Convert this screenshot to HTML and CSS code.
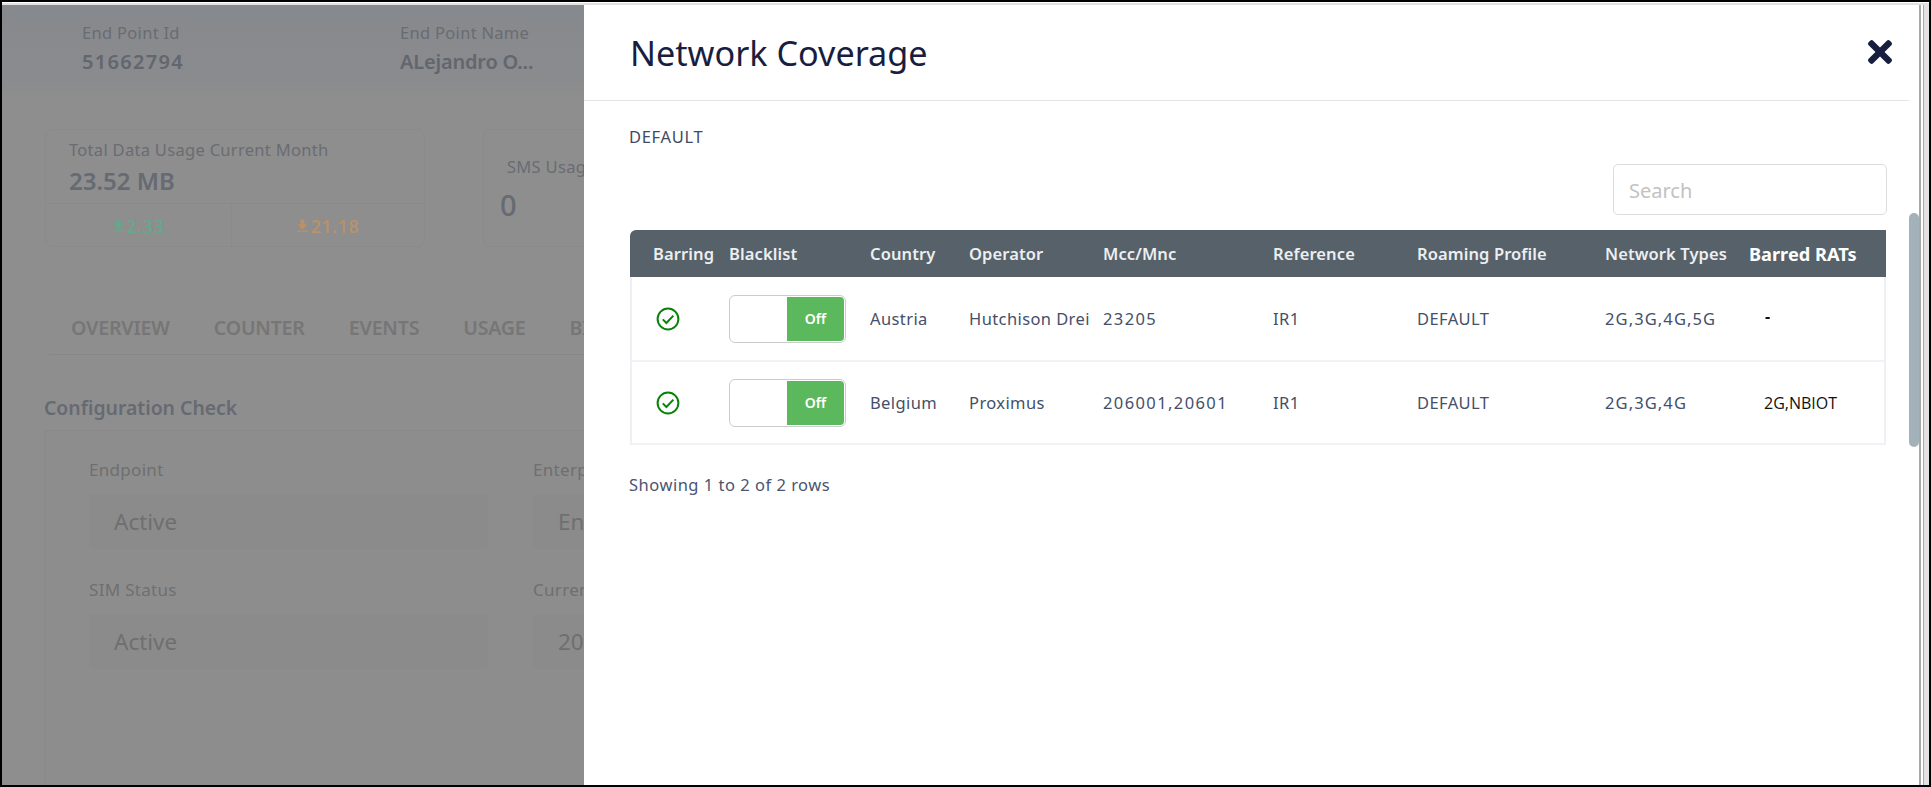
FILE: index.html
```html
<!DOCTYPE html>
<html lang="en">
<head>
<meta charset="utf-8">
<title>Network Coverage</title>
<link rel="stylesheet" href="styles.css">
</head>
<body>
<div class="frame">
  <div class="topline"></div>
  <div class="stage">
    <section class="back">
      <header class="ep-head">
        <div class="ep-id"><div class="ep-label">End Point Id</div><div class="ep-value ep-digits">51662794</div></div>
        <div class="ep-name"><div class="ep-label">End Point Name</div><div class="ep-value">ALejandro O...</div></div>
      </header>
      <div class="cards">
        <div class="card card-wide">
          <div class="card-top">
            <div class="card-label">Total Data Usage Current Month</div>
            <div class="card-value">23.52 MB</div>
          </div>
          <div class="card-split">
            <div class="split up"><svg class="arrow" viewBox="0 0 12 14"><path d="M6 0l5 6H8v4H4V6H1zM0 12h12v1.2H0z"/></svg>2.33</div>
            <div class="split down"><svg class="arrow" viewBox="0 0 12 14"><path d="M4 0h4v5h3l-5 6-5-6h3zM0 12h12v1.2H0z"/></svg>21.18</div>
          </div>
        </div>
        <div class="card card-sms">
          <div class="card-label">SMS Usage</div>
          <div class="sms-value">0</div>
        </div>
      </div>
      <nav class="tabs">
        <span class="tab">OVERVIEW</span><span class="tab">COUNTER</span><span class="tab">EVENTS</span><span class="tab">USAGE</span><span class="tab">BILLING</span>
      </nav>
      <h2 class="config-title">Configuration Check</h2>
      <div class="config">
        <div class="field"><div class="field-label">Endpoint</div><div class="field-box">Active</div></div>
        <div class="field"><div class="field-label">Enterprise</div><div class="field-box">Enabled</div></div>
        <div class="field"><div class="field-label">SIM Status</div><div class="field-box">Active</div></div>
        <div class="field"><div class="field-label">Current</div><div class="field-box">2023</div></div>
      </div>
    </section>
    <aside class="drawer">
      <div class="drawer-main">
        <header class="drawer-head">
          <h1 class="drawer-title">Network Coverage</h1>
          <svg class="close" viewBox="0 80 352 352"><path d="M242.72 256l100.07-100.07c12.28-12.28 12.28-32.19 0-44.48l-22.24-22.24c-12.28-12.28-32.19-12.28-44.48 0L176 189.28 75.93 89.21c-12.28-12.28-32.19-12.28-44.48 0L9.21 111.45c-12.28 12.28-12.28 32.19 0 44.48L109.28 256 9.21 356.07c-12.28 12.28-12.28 32.19 0 44.48l22.24 22.24c12.28 12.28 32.2 12.28 44.48 0L176 322.72l100.07 100.07c12.28 12.28 32.2 12.28 44.48 0l22.24-22.24c12.28-12.28 12.28-32.19 0-44.48L242.72 256z"/></svg>
        </header>
        <div class="drawer-body">
          <div class="profile">DEFAULT</div>
          <div class="toolbar"><input class="search" type="text" placeholder="Search"></div>
          <table class="grid">
            <colgroup>
              <col class="c1"><col class="c2"><col class="c3"><col class="c4"><col class="c5"><col class="c6"><col class="c7"><col class="c8"><col class="c9">
            </colgroup>
            <thead>
              <tr><th class="first">Barring</th><th>Blacklist</th><th>Country</th><th>Operator</th><th>Mcc/Mnc</th><th>Reference</th><th>Roaming Profile</th><th>Network Types</th><th class="rat-head">Barred RATs</th></tr>
            </thead>
            <tbody>
              <tr class="row-a">
                <td class="first"><svg class="ok" viewBox="0 0 24 24"><circle cx="12" cy="12" r="10.4"/><path d="M6.8 12.4l3.6 3.6 7-7.4"/></svg></td>
                <td><div class="toggle"><span class="toggle-off">Off</span></div></td>
                <td>Austria</td><td>Hutchison Drei</td><td class="num">23205</td><td>IR1</td><td>DEFAULT</td><td class="net">2G,3G,4G,5G</td><td class="rat dash">-</td>
              </tr>
              <tr class="row-b">
                <td class="first"><svg class="ok" viewBox="0 0 24 24"><circle cx="12" cy="12" r="10.4"/><path d="M6.8 12.4l3.6 3.6 7-7.4"/></svg></td>
                <td><div class="toggle"><span class="toggle-off">Off</span></div></td>
                <td>Belgium</td><td>Proximus</td><td class="num">206001,20601</td><td>IR1</td><td>DEFAULT</td><td class="net">2G,3G,4G</td><td class="rat">2G,NBIOT</td>
              </tr>
            </tbody>
          </table>
          <div class="rows-note">Showing 1 to 2 of 2 rows</div>
        </div>
      </div>
      <div class="track"><div class="thumb"></div></div>
    </aside>
    <div class="edge"></div>
  </div>
</div>
</body>
</html>
```

FILE: styles.css
```css
* { box-sizing: border-box; }
html, body { margin: 0; padding: 0; height: 100%; overflow: hidden; }
body { font-family: "Noto Sans", "Open Sans", sans-serif; background: #fff; color: #444f6a; }

.frame { height: 787px; border: 2px solid #000; display: flex; flex-direction: column; background: #fff; }
.topline { height: 2px; margin-top: 1px; background: #e2e2e2; flex: none; }
.stage { flex: 1; min-height: 0; display: flex; }

/* dimmed page behind the drawer */
.back { width: 582px; flex: none; overflow: hidden; background: #8e8e8e; color: #6b6e73; }
.ep-head { height: 93px; background: linear-gradient(#86898d, #8a8b8d 80%, #8e8e8e); padding: 17px 0 0 80px; display: flex; }
.ep-id { width: 318px; }
.ep-label { font-size: 16.5px; letter-spacing: .3px; line-height: 22px; color: #696c72; white-space: nowrap; }
.ep-value { margin-top: 4px; font-size: 20px; font-weight: 600; line-height: 28px; color: #62666e; white-space: nowrap; letter-spacing: -.2px; }
.ep-digits { letter-spacing: 1.3px; }

.cards { display: flex; gap: 58px; padding: 31px 0 0 43px; }
.card { height: 118px; border: 1px solid #8a8a8a; border-radius: 8px; flex: none; }
.card-wide { width: 380px; }
.card-sms { width: 200px; padding: 25px 0 0 23px; }
.card-top { height: 74px; padding: 6px 0 0 23px; border-bottom: 1px solid #8a8a8a; }
.card-label { font-size: 16.5px; letter-spacing: .3px; line-height: 28px; color: #696c72; white-space: nowrap; }
.card-sms .card-label { line-height: 24px; }
.card-value { margin-top: 1px; font-size: 24px; font-weight: 600; line-height: 32px; color: #666a72; }
.card-split { display: flex; height: 42px; padding-top: 1px; }
.split { flex: 1; font-size: 18px; letter-spacing: .5px; font-weight: 500; display: flex; align-items: center; justify-content: center; gap: 3px; }
.split:first-child { flex: none; width: 186px; border-right: 1px solid #8a8a8a; }
.up { color: #62aa8c; fill: #62aa8c; }
.down { color: #bd9168; fill: #bd9168; }
.arrow { width: 11px; height: 14px; }
.sms-value { font-size: 29px; font-weight: 500; margin: 8px 0 0 -7px; color: #666a72; line-height: 36px; }

.tabs { margin: 66px 0 0 47px; height: 42px; border-bottom: 1px solid #878787; display: flex; gap: 44px; padding: 0 0 0 22px; overflow: hidden; white-space: nowrap; }
.tab { font-size: 19.6px; font-weight: 600; line-height: 30px; color: #767676; letter-spacing: -.2px; }

.config-title { margin: 40px 0 0 42px; font-size: 19.4px; font-weight: 600; line-height: 26px; color: #666a72; white-space: nowrap; }
.config { margin: 9px 0 0 42px; padding: 28px 0 0 44px; height: 370px; width: 900px; background: #8d8d8d; border: 1px solid #898989; border-radius: 4px; display: grid; grid-template-columns: 399px 399px; column-gap: 45px; align-content: start; row-gap: 30px; }
.field-label { font-size: 17px; letter-spacing: .3px; line-height: 22px; color: #6f6f6f; white-space: nowrap; }
.field-box { margin-top: 13px; height: 55px; background: #8b8b8b; border-radius: 4px; padding-left: 25px; font-size: 22.5px; line-height: 55px; color: #6f6f6f; }

/* drawer */
.drawer { flex: 1; min-width: 0; background: #fff; display: flex; }
.drawer-main { flex: 1; min-width: 0; }
.drawer-head { height: 96px; border-bottom: 1px solid #e4e4e4; padding: 0 17px 0 46px; display: flex; align-items: center; justify-content: space-between; }
.drawer-title { margin: 0; font-size: 34.2px; font-weight: 400; line-height: 44px; color: #181e40; }
.close { width: 24px; height: 24px; fill: #181e40; margin-top: -2px; }
.drawer-body { padding: 0 23px 0 46px; }
.profile { padding-top: 25px; margin-left: -1px; font-size: 16.5px; letter-spacing: .7px; line-height: 22px; color: #3f4a63; }
.toolbar { display: flex; justify-content: flex-end; margin: 16px -1px 15px 0; }
.search { width: 274px; height: 51px; border: 1px solid #dcdcdc; border-radius: 5px; padding: 2px 15px 0; font: 400 20px "Noto Sans", sans-serif; outline: none; background: #fff; }
.search::placeholder { color: #c2c2c2; opacity: 1; }

.grid { width: 1256px; table-layout: fixed; border-collapse: separate; border-spacing: 0; font-size: 16.5px; letter-spacing: .4px; }
.c1 { width: 99px; } .c2 { width: 141px; } .c3 { width: 99px; } .c4 { width: 134px; } .c5 { width: 170px; } .c6 { width: 144px; } .c7 { width: 188px; } .c8 { width: 144px; } .c9 { width: 137px; }
.grid th { height: 47px; background: #566169; color: #eceff1; font-size: 16.5px; letter-spacing: .1px; font-weight: 600; text-align: left; padding: 0; white-space: nowrap; }
.grid thead th:first-child { border-radius: 6px 0 0 0; }
.grid th.first { padding-left: 23px; }
.grid td { padding: 0; color: #444f6a; white-space: nowrap; border-bottom: 2px solid #f1f2f6; }
.row-a td { height: 85px; }
.row-b td { height: 83px; }
.grid td.first { padding-left: 24px; border-left: 2px solid #eef0f4; }
.grid td:last-child { border-right: 2px solid #eef0f4; }
.grid td.num { letter-spacing: 1.4px; }
.grid td.net { letter-spacing: 1.1px; }
.ok { display: block; width: 24px; height: 24px; fill: none; stroke: #0a820a; stroke-width: 2; }
.toggle { width: 117px; height: 48px; border: 1px solid #ccc; border-radius: 6px; padding: 1px; display: flex; justify-content: flex-end; letter-spacing: 0; }
.toggle-off { width: 57px; height: 100%; background: #5cb85c; color: #fff; font-size: 14px; font-weight: 600; display: flex; align-items: center; justify-content: center; border-radius: 0 4px 4px 0; }
.grid td.rat { padding-left: 15px; color: #111; font-size: 16px; letter-spacing: 0; font-family: "Open Sans", sans-serif; }
.grid td.dash { font-weight: 700; padding-bottom: 6px; padding-left: 16px; }
.grid th.rat-head { color: #fff; font-weight: 700; font-size: 18.2px; letter-spacing: 0; }
.rows-note { margin-top: 29px; margin-left: -1px; font-size: 16.5px; letter-spacing: .5px; line-height: 22px; color: #4a5570; }

.track { width: 10px; flex: none; background: #fff; }
.thumb { margin-top: 208px; height: 234px; background: #a3b2ba; border-radius: 5px; }

.edge { width: 10px; flex: none; border-left: 2px solid #a8a8a8; background: #e2e2e2; }
.edge::before { content: ""; display: block; width: 2px; height: 100%; background: #fff; box-shadow: 1px 0 0 #a8a8a8; }
```
